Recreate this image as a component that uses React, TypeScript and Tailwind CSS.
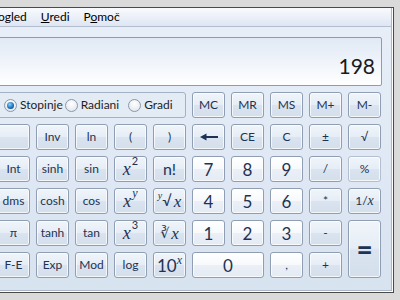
import React from 'react';

const base =
  'flex items-center justify-center rounded-[3px] border border-[#8f9eb3] text-[#1d3353] shadow-[inset_0_0_0_1px_rgba(255,255,255,0.7)] leading-none';
const blue = 'bg-[linear-gradient(to_bottom,#f1f5fa_0%,#e6edf6_48%,#dae4f0_52%,#d4dfec_100%)]';
const white = 'bg-[linear-gradient(to_bottom,#ffffff_0%,#f7f9fc_48%,#ebf0f7_52%,#e4ebf4_100%)]';

const serif = "font-['Liberation_Serif',serif] italic";

type Key = { label: React.ReactNode; num?: boolean; cls?: string };

const Backspace = () => (
  <svg width="18" height="8" viewBox="0 0 18 8">
    <path d="M0 4 L6.5 0.5 L6.5 7.5 Z" fill="#1d3353" />
    <rect x="5" y="3" width="13" height="2" fill="#1d3353" />
  </svg>
);

const Radio = ({ label, checked, w }: { label: string; checked?: boolean; w: string }) => (
  <div className={`flex items-center gap-[3px] ${w}`}>
    <span className="flex h-[13px] w-[13px] items-center justify-center rounded-full border border-[#8a98ab] bg-[radial-gradient(circle_at_50%_35%,#ffffff,#dde2e8)]">
      {checked && (
        <span className="h-[7px] w-[7px] rounded-full bg-[radial-gradient(circle_at_40%_35%,#86d4ff,#1b68b8_60%,#0c3e78)]" />
      )}
    </span>
    <span className="text-[12px] text-[#1e1e1e]">{label}</span>
  </div>
);

const keys: Key[] = [
  // row 1 (radio group comes first)
  { label: 'MC' },
  { label: 'MR' },
  { label: 'MS' },
  { label: 'M+' },
  { label: 'M-' },
  // row 2
  { label: '' },
  { label: 'Inv' },
  { label: 'ln' },
  { label: '(' },
  { label: ')' },
  { label: <Backspace /> },
  { label: 'CE' },
  { label: 'C' },
  { label: '±' },
  { label: '√' },
  // row 3
  { label: 'Int' },
  { label: 'sinh' },
  { label: 'sin' },
  {
    label: (
      <span className="flex items-start">
        <span className={`${serif} text-[18px]`}>x</span>
        <span className="-mt-[5px] ml-[1px] text-[11px]">2</span>
      </span>
    ),
  },
  { label: <span className="text-[16px]">n!</span> },
  { label: '7', num: true, cls: 'text-[17px]' },
  { label: '8', num: true, cls: 'text-[17px]' },
  { label: '9', num: true, cls: 'text-[17px]' },
  { label: '/' },
  { label: '%', cls: 'border-[#b2bfd0]' },
  // row 4
  { label: 'dms' },
  { label: 'cosh' },
  { label: 'cos' },
  {
    label: (
      <span className="flex items-start">
        <span className={`${serif} text-[18px]`}>x</span>
        <span className={`${serif} -mt-[5px] ml-[1px] text-[12px]`}>y</span>
      </span>
    ),
  },
  {
    label: (
      <span className="flex items-start">
        <span className={`${serif} -mt-[2px] text-[10px]`}>y</span>
        <span className="text-[15px]">√</span>
        <span className={`${serif} ml-[2px] text-[17px]`}>x</span>
      </span>
    ),
  },
  { label: '4', num: true, cls: 'text-[17px]' },
  { label: '5', num: true, cls: 'text-[17px]' },
  { label: '6', num: true, cls: 'text-[17px]' },
  { label: '*' },
  {
    label: (
      <span>
        1/<span className={`${serif} text-[14px]`}>x</span>
      </span>
    ),
  },
  // row 5
  { label: 'π' },
  { label: 'tanh' },
  { label: 'tan' },
  {
    label: (
      <span className="flex items-start">
        <span className={`${serif} text-[18px]`}>x</span>
        <span className="-mt-[5px] ml-[1px] text-[11px]">3</span>
      </span>
    ),
  },
  {
    label: (
      <span className="flex items-center">
        <span className="font-['DejaVu_Sans',sans-serif] text-[14px]">∛</span>
        <span className={`${serif} ml-[2px] text-[17px]`}>x</span>
      </span>
    ),
  },
  { label: '1', num: true, cls: 'text-[17px]' },
  { label: '2', num: true, cls: 'text-[17px]' },
  { label: '3', num: true, cls: 'text-[17px]' },
  { label: '-' },
  { label: <span className="text-[28px] font-bold">=</span>, cls: 'row-span-2' },
  // row 6
  { label: 'F-E' },
  { label: 'Exp' },
  { label: 'Mod' },
  { label: 'log' },
  {
    label: (
      <span className="flex items-start">
        <span className="text-[17px]">10</span>
        <span className={`${serif} -mt-[3px] text-[12px]`}>x</span>
      </span>
    ),
  },
  { label: '0', num: true, cls: 'col-span-2 text-[17px]' },
  { label: ',', num: true },
  { label: '+' },
];

export default function App() {
  return (
    <div className="h-[300px] w-[400px] overflow-hidden bg-[#dadada] pt-[7px] font-[Lato,'Noto_Sans',sans-serif]">
      <div className="-ml-[20px] h-[286px] w-[414px] border border-[#4a4a4a]">
        <div className="flex h-full flex-col bg-white pr-[1px] pb-[1px]">
          <div className="flex flex-1 flex-col border-r border-b border-[#aab7c8]">
            <div className="flex h-[18px] items-center bg-[linear-gradient(to_bottom,#f8fafd,#dfe6f3)] pl-[3px] text-[12px] text-black">
              <span className="px-[7px]">
                <span className="underline">P</span>ogled
              </span>
              <span className="px-[7px]">
                <span className="underline">U</span>redi
              </span>
              <span className="px-[7px]">
                P<span className="underline">o</span>moč
              </span>
            </div>
            <div className="flex flex-1 flex-col gap-[6px] border-t border-[#b3bece] bg-[linear-gradient(to_bottom,#e7eef8,#d8e3f0)] pt-[10px] pr-[9px] pl-[16px]">
              <div className="flex h-[49px] items-end justify-end rounded-[2px] border border-[#8c9db2] bg-[linear-gradient(to_bottom,#e0e9f5,#ffffff)] pr-[6px] pb-[9px]">
                <span className="text-[21px] leading-none text-[#1a1a1a]">198</span>
              </div>
              <div className="grid grid-cols-[repeat(10,33px)] grid-rows-[repeat(6,26px)] gap-[6px] text-[12px]">
                <div className="col-span-5 flex items-center rounded-[3px] border border-[#a3b1c4] bg-[#e3ebf5] pl-[6px]">
                  <Radio label="Stopinje" checked w="w-[64px]" />
                  <Radio label="Radiani" w="w-[67px]" />
                  <Radio label="Gradi" w="w-[60px]" />
                </div>
                {keys.map((k, i) => (
                  <button key={i} className={`${base} ${k.num ? white : blue} ${k.cls ?? ''}`}>
                    {k.label}
                  </button>
                ))}
              </div>
            </div>
          </div>
        </div>
      </div>
    </div>
  );
}
